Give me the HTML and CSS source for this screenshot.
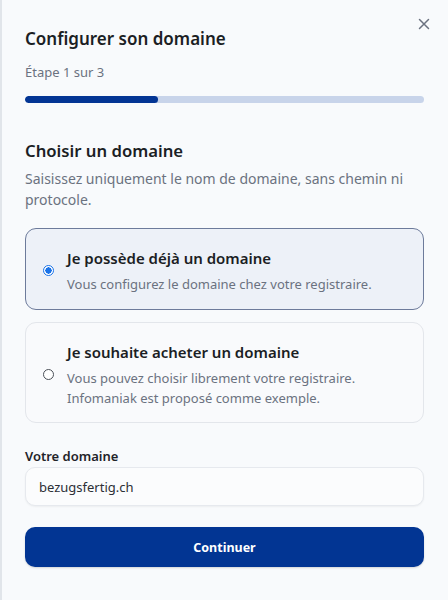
FILE: index.html
```html
<!DOCTYPE html>
<html lang="fr">
<head>
<meta charset="utf-8">
<title>Configurer son domaine</title>
<link rel="stylesheet" href="styles.css">
</head>
<body>
<div class="dialog">
  <button class="close" aria-label="Fermer">
    <svg width="12" height="12" viewBox="0 0 12 12"><path d="M1.5 1.5 L10.5 10.5 M10.5 1.5 L1.5 10.5" stroke="#6b7280" stroke-width="1.5" stroke-linecap="round" fill="none"/></svg>
  </button>
  <h1 class="title">Configurer son domaine</h1>
  <p class="step">Étape 1 sur 3</p>
  <div class="progress"><div class="progress-fill" style="width:33.33%"></div></div>

  <h2 class="section">Choisir un domaine</h2>
  <p class="desc">Saisissez uniquement le nom de domaine, sans chemin ni protocole.</p>

  <div class="options">
    <label class="option selected">
      <span class="radio checked"></span>
      <span class="option-text">
        <span class="option-title">Je possède déjà un domaine</span>
        <span class="option-desc">Vous configurez le domaine chez votre registraire.</span>
      </span>
    </label>
    <label class="option">
      <span class="radio"></span>
      <span class="option-text">
        <span class="option-title">Je souhaite acheter un domaine</span>
        <span class="option-desc">Vous pouvez choisir librement votre registraire.<br>Infomaniak est proposé comme exemple.</span>
      </span>
    </label>
  </div>

  <div class="field">
    <div class="label">Votre domaine</div>
    <div class="input">bezugsfertig.ch</div>
  </div>

  <button class="primary">Continuer</button>
</div>
</body>
</html>
```

FILE: styles.css
```css
html, body {
  margin: 0;
  padding: 0;
  background: #f8fafc;
}
body {
  font-family: "Noto Sans", "Open Sans", sans-serif;
  color: #1f2329;
}
.dialog {
  position: relative;
  box-sizing: border-box;
  min-height: 600px;
  border-left: 2px solid #e1e5ea;
  padding: 26px 24px 0 23px;
  display: flex;
  flex-direction: column;
}
.close {
  position: absolute;
  top: 18px;
  right: 18px;
  width: 12px;
  height: 12px;
  padding: 0;
  border: 0;
  background: none;
  display: flex;
}
.title {
  margin: 0;
  font-size: 17px;
  line-height: 26px;
  font-weight: 600;
  color: #1b1e24;
}
.step {
  margin: 10px 0 0;
  font-size: 13px;
  line-height: 20px;
  color: #6b7280;
}
.progress {
  margin-top: 14px;
  height: 7px;
  border-radius: 4px;
  background: #c8d4ea;
  overflow: hidden;
}
.progress-fill {
  height: 100%;
  background: #033594;
  border-radius: 4px;
}
.section {
  margin: 35px 0 0;
  font-size: 16.7px;
  line-height: 26px;
  font-weight: 600;
  color: #1b1e24;
}
.desc {
  margin: 4px 0 0;
  font-size: 14px;
  line-height: 21px;
  color: #6b7280;
}
.options {
  margin-top: 18px;
  display: flex;
  flex-direction: column;
  gap: 12px;
}
.option {
  display: flex;
  align-items: center;
  gap: 13px;
  padding: 18px 16px 15px 17px;
  border: 1px solid #e3e6eb;
  border-radius: 11px;
  background: #f9fafc;
}
.option + .option {
  padding-bottom: 14px;
}
.option.selected {
  border-color: #6d7b9b;
  background: #edf1f8;
}
.radio {
  flex: none;
  box-sizing: border-box;
  width: 11px;
  height: 11px;
  border-radius: 50%;
  border: 1.3px solid #4b5058;
  background: #fff;
}
.radio.checked {
  border: 1.5px solid #1a73e8;
  background: radial-gradient(circle, #1a73e8 0 3px, #fff 3.3px);
}
.option-text {
  display: flex;
  flex-direction: column;
  gap: 5px;
}
.option-title {
  font-size: 15px;
  line-height: 22px;
  font-weight: 600;
  color: #1b1e24;
}
.option-desc {
  font-size: 13px;
  line-height: 20px;
  color: #6b7280;
}
.field {
  margin-top: 24px;
}
.label {
  font-size: 13px;
  line-height: 18px;
  font-weight: 600;
  color: #1f2329;
}
.input {
  margin-top: 2px;
  box-sizing: border-box;
  height: 39px;
  padding: 0 13px;
  display: flex;
  align-items: center;
  font-size: 13px;
  color: #2b2f36;
  background: #fbfcfd;
  border: 1px solid #e6e9ee;
  border-radius: 10px;
  box-shadow: 0 1px 2px rgba(0,0,0,0.05);
}
.primary {
  margin-top: 21px;
  height: 40px;
  border: 0;
  border-radius: 10px;
  background: #023593;
  color: #fff;
  font-family: inherit;
  font-size: 12.5px;
  font-weight: 700;
  box-shadow: 0 1px 2px rgba(0,0,0,0.15);
}
```
